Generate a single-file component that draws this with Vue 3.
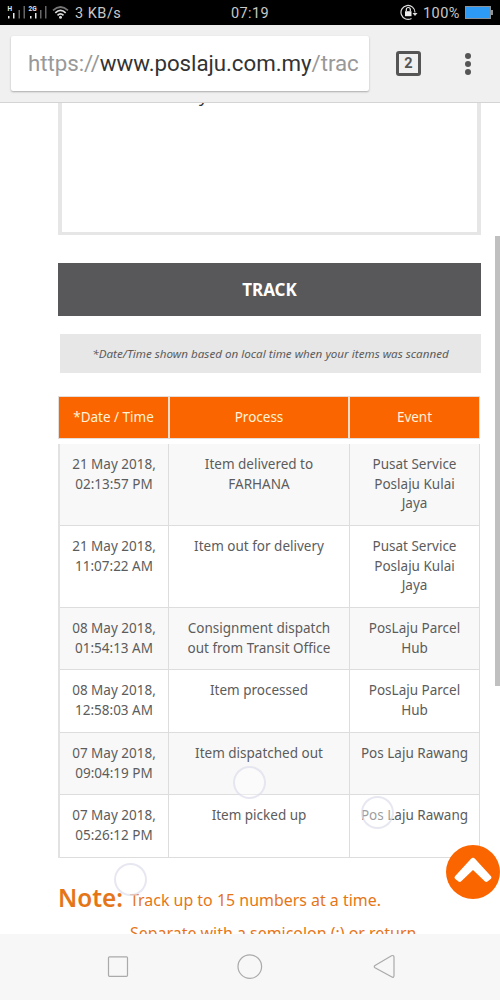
<script setup>
const rows = [
  { h: 82, date: ['21 May 2018,', '02:13:57 PM'], process: ['Item delivered to', 'FARHANA'], event: ['Pusat Service', 'Poslaju Kulai', 'Jaya'] },
  { h: 82, date: ['21 May 2018,', '11:07:22 AM'], process: ['Item out for delivery'], event: ['Pusat Service', 'Poslaju Kulai', 'Jaya'] },
  { h: 62, date: ['08 May 2018,', '01:54:13 AM'], process: ['Consignment dispatch', 'out from Transit Office'], event: ['PosLaju Parcel', 'Hub'] },
  { h: 63, date: ['08 May 2018,', '12:58:03 AM'], process: ['Item processed'], event: ['PosLaju Parcel', 'Hub'] },
  { h: 62, date: ['07 May 2018,', '09:04:19 PM'], process: ['Item dispatched out'], event: ['Pos Laju Rawang'] },
  { h: 63, date: ['07 May 2018,', '05:26:12 PM'], process: ['Item picked up'], event: ['Pos Laju Rawang'] },
]
</script>

<template>
  <div class="screen">
    <header class="status">
      <svg class="signals" width="72" height="25" viewBox="0 0 72 25">
        <g fill="#e8e8e8">
          <text x="7.500" y="10.500" class="net">H</text>
          <rect x="8" y="16" width="1.500" height="2.500" /><rect x="13" y="13" width="1.500" height="5.500" />
          <text x="28.500" y="10.500" class="net">2G</text>
          <rect x="30" y="16" width="1.500" height="2.500" /><rect x="35" y="13" width="1.500" height="5.500" />
        </g>
        <g fill="#666"><rect x="18.500" y="10" width="1.500" height="8.500" /><rect x="23.500" y="6" width="1.500" height="12.500" />
          <rect x="40" y="10" width="1.500" height="8.500" /><rect x="45" y="6" width="1.500" height="12.500" /></g>
        <g fill="none" stroke="#ddd" stroke-width="1.700">
          <path d="M53 10.300Q60.500 3.700 68 10.300" stroke="#777" />
          <path d="M55.300 12.900Q60.500 8 65.700 12.900" /><path d="M57.500 15.300Q60.500 12.400 63.500 15.300" />
        </g>
        <circle cx="60.500" cy="17.200" r="1.500" fill="#ddd" />
      </svg>
      <span class="speed">3 KB/s</span>
      <span class="clock">07:19</span>
      <div class="power">
        <svg width="18" height="17" viewBox="0 0 18 17">
          <path d="M11.500 14.500A7 7 0 1 1 15 8.500" fill="none" stroke="#ddd" stroke-width="1.200" />
          <path d="M12.500 9h5l-2.500 3z" fill="#ddd" />
          <rect x="5" y="7.200" width="6.500" height="5" fill="#eee" /><path d="M6.300 7V5.500a2 2 0 0 1 4 0V7" fill="none" stroke="#eee" stroke-width="1.200" />
        </svg>
        <span class="percent">100%</span>
        <svg width="28" height="13" viewBox="0 0 28 13"><rect x=".5" y=".5" width="25" height="12" fill="#2d9af5" stroke="#8d9297" /><rect x="26" y="4" width="2" height="5" fill="#8d9297" /></svg>
      </div>
    </header>
    <div class="toolbar">
      <div class="url"><span class="dim">https://</span><span class="host">www.poslaju.com.my</span><span class="dim">/trac</span></div>
      <div class="tabs">2</div>
      <svg class="dots" width="8" height="24" viewBox="0 0 8 24" fill="#555"><circle cx="4" cy="4" r="3" /><circle cx="4" cy="12" r="3" /><circle cx="4" cy="20" r="3" /></svg>
    </div>
    <main>
      <div class="entry"><span class="scrap">y</span></div>
      <div class="track">TRACK</div>
      <div class="hint"><span>*Date/Time shown based on local time when your items was scanned</span></div>
      <div class="table">
        <div class="row head"><div>*Date / Time</div><div>Process</div><div>Event</div></div>
        <div class="rows">
          <div v-for="(r, i) in rows" :key="i" class="row" :style="{ height: r.h + 'px' }">
            <div class="date"><p v-for="t in r.date" :key="t">{{ t }}</p></div>
            <div><p v-for="t in r.process" :key="t">{{ t }}</p></div>
            <div><p v-for="t in r.event" :key="t">{{ t }}</p></div>
          </div>
        </div>
      </div>
      <div class="note"><strong>Note:</strong><div><p class="n1">Track up to 15 numbers at a time.</p><p class="n2">Separate with a semicolon (;) or return</p></div></div>
    </main>
    <div class="scrollbar"></div>
    <svg class="up" width="54" height="54" viewBox="0 0 54 54"><circle cx="27" cy="27" r="27" fill="#fb6500" /><path d="M9 31.200L24.800 14Q27 11.500 29.200 14L45 31.200Q46 32.500 45 33.700L41.500 36.500Q40 37.500 38.500 36L27 25L15.500 36Q14 37.500 12.500 36.500L9 33.700Q8 32.500 9 31.200Z" fill="#fff" /></svg>
    <i class="touch a"></i><i class="touch b"></i><i class="touch c"></i>
    <nav>
      <svg width="500" height="66" viewBox="0 0 500 66" fill="none" stroke="#aaa" stroke-width="1.200">
        <rect x="108.500" y="22.800" width="19" height="19.500" rx="1" /><circle cx="249.800" cy="32.600" r="11.800" />
        <path d="M375 31.500L391.500 21.800Q394 20.800 394 23.300V41.300Q394 44.300 391.500 42.800L375 33.800Q373.500 32.800 375 31.500Z" />
      </svg>
    </nav>
  </div>
</template>

<style>
body { margin: 0; background: #fff; }
</style>

<style scoped>
* { box-sizing: border-box; }
p { margin: 0; }
.screen { position: relative; width: 500px; height: 1000px; overflow: hidden; background: #fff; display: flex; flex-direction: column; font-family: "Noto Sans", sans-serif; }
.status { height: 25px; flex: none; background: #000; color: #c8c8c8; display: flex; align-items: center; font: 14.5px/25px Roboto, sans-serif; position: relative; }
.net { font: bold 6.5px Roboto, sans-serif; }
.speed { margin-left: 3px; letter-spacing: .5px; padding-top: 1px; }
.clock { position: absolute; left: 231px; top: 1px; letter-spacing: .4px; }
.power { margin-left: auto; display: flex; align-items: center; gap: 5px; padding-right: 7px; }
.percent { letter-spacing: .5px; padding-top: 1px; }
.toolbar { height: 78px; flex: none; background: #f0f0f0; border-bottom: 1px solid #d4d4d4; display: flex; align-items: center; padding-left: 11px; }
.url { width: 358px; height: 55px; background: #fff; border-radius: 2px; box-shadow: 0 1px 2px #aaa; padding-left: 17px; font: 22.3px/55px Roboto, sans-serif; white-space: nowrap; letter-spacing: -.05px; }
.dim { color: #999; }
.host { color: #333; }
.tabs { width: 25px; height: 25px; border: 3px solid #555; border-radius: 3px; margin-left: 27px; font: bold 14.5px/19px Roboto, sans-serif; color: #555; text-align: center; }
.dots { margin-left: 43px; }
main { flex: 1; margin-left: 58px; width: 423px; }
.entry { height: 132px; border: 4px solid #e6e6e6; border-top: 0; border-bottom-width: 3px; overflow: hidden; }
.scrap { display: block; margin: -18px 0 0 137px; font-size: 17px; line-height: 22px; color: #333; }
.track { margin-top: 28px; height: 53px; background: #58585a; color: #fff; font-size: 17px; font-weight: 700; line-height: 53px; text-align: center; }
.hint { margin: 18px 0 0 2px; height: 39px; background: #e7e7e7; color: #5c5c5c; font-size: 11.65px; font-style: italic; line-height: 39px; text-align: center; white-space: nowrap; }
.table { margin-top: 23px; width: 422px; color: #5c5c5c; font-size: 13.5px; line-height: 19.5px; text-align: center; }
.row { display: grid; }
.row > div { white-space: nowrap; }
.head { grid-template-columns: 109px 180px 131px; height: 43px; background: #fb6500; border: 1px solid #e5ddd7; color: #fff3d8; line-height: 41px; }
.head > div + div { border-left: 2px solid #f7ddc8; }
.rows { margin-top: 5px; border-left: 2px solid #e2e2e2; border-right: 1px solid #ddd; }
.rows .row { grid-template-columns: 108px 181px 130px; border-bottom: 1px solid #ddd; }
.rows .row > div { padding-top: 11px; }
.rows .row > div + div { border-left: 1px solid #ddd; }
.rows .row:nth-child(odd) { background: #f8f8f8; }
.note { margin-top: 22px; display: flex; color: #e57618; white-space: nowrap; }
.note strong { width: 72px; font-size: 24.3px; font-weight: 600; line-height: 36px; }
.note p { font-size: 15.95px; line-height: 33px; }
.n1 { padding-top: 4px; }
.scrollbar { position: absolute; left: 495px; top: 236px; width: 5px; height: 450px; background: #c0c0c0; }
.up { position: absolute; left: 446px; top: 845px; }
.touch { position: absolute; width: 33px; height: 33px; border-radius: 50%; border: 2px solid rgba(215, 215, 232, .6); background: rgba(255, 255, 255, .4); }
.a { left: 233px; top: 766px; }
.b { left: 361px; top: 796px; }
.c { left: 114px; top: 863px; }
nav { position: absolute; left: 0; top: 934px; width: 500px; height: 66px; background: #f7f7f7; }
</style>
